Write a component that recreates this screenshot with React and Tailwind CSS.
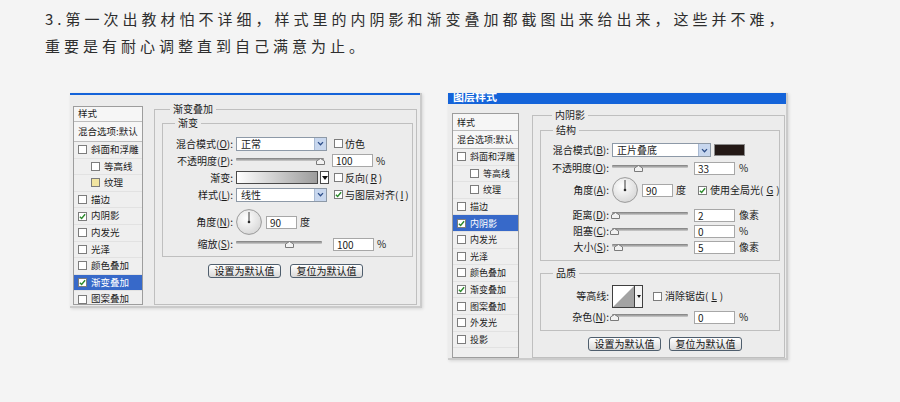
import React from 'react';

const Check = ({ checked, tint }) => (
  <span
    className={`inline-flex items-center justify-center w-[9px] h-[9px] shrink-0 border border-[#7c7c7c] ${
      tint ? 'bg-[#f1e4a0]' : 'bg-white'
    }`}
  >
    {checked && (
      <svg viewBox="0 0 8 8" className="w-[7px] h-[7px]">
        <path d="M1 4.2 L3 6.3 L7 1.4" fill="none" stroke="#2c8a2c" strokeWidth="1.6" />
      </svg>
    )}
  </span>
);

const Key = ({ text, k }) => (
  <>
    {text}
    {k && (
      <>
        (<span className="underline">{k}</span>)
      </>
    )}
    :
  </>
);

const Slider = ({ className, pos }) => (
  <div className={`relative h-[10px] shrink-0 ${className}`}>
    <div className="mt-[2px] h-[3px] rounded-[1px] bg-linear-to-b from-[#7d7d7d] to-[#cfcfcf]" />
    <svg
      viewBox="0 0 9 7"
      className="absolute top-[2px] w-[9px] h-[7px]"
      style={{ left: `calc(${pos * 100}% - 4.5px)` }}
    >
      <path d="M0.5 6.5 L0.5 3 L4.5 0.5 L8.5 3 L8.5 6.5 Z" fill="#f2f2f2" stroke="#7a7a7a" />
    </svg>
  </div>
);

const Select = ({ className, value }) => (
  <div className={`flex h-[14px] shrink-0 border border-[#8d99a7] bg-white ${className}`}>
    <span className="flex-1 pl-[4px] text-[10px] leading-[12px] whitespace-nowrap">{value}</span>
    <span className="w-[12px] flex items-center justify-center bg-[#c8d7ee] border-l border-[#a9bad2]">
      <svg viewBox="0 0 8 6" className="w-[7px] h-[5px]">
        <path d="M1 1.3 L4 4.5 L7 1.3" fill="none" stroke="#2c4d88" strokeWidth="1.5" />
      </svg>
    </span>
  </div>
);

const Field = ({ className, value }) => (
  <div
    className={`h-[13px] shrink-0 bg-white border border-[#a7a7a7] pl-[3px] text-[10px] leading-[11px] ${className}`}
  >
    {value}
  </div>
);

const Dial = () => (
  <svg viewBox="0 0 26 26" className="w-[26px] h-[26px] shrink-0">
    <defs>
      <radialGradient id="dialFill" cx="40%" cy="35%" r="70%">
        <stop offset="0%" stopColor="#ffffff" />
        <stop offset="100%" stopColor="#d6d6d6" />
      </radialGradient>
    </defs>
    <circle cx="13" cy="13" r="12.4" fill="url(#dialFill)" stroke="#9a9a9a" strokeWidth="1" />
    <line x1="13" y1="13" x2="13" y2="3" stroke="#3a3a3a" strokeWidth="1" />
    <circle cx="13" cy="13" r="1.3" fill="#2a2a2a" />
  </svg>
);

const Btn = ({ children }) => (
  <div className="w-[73px] h-[14px] flex items-center justify-center rounded-[3px] border border-[#4f5e6d] bg-linear-to-b from-white to-[#d9d9d9] text-[10px] leading-none text-[#111] whitespace-nowrap">
    {children}
  </div>
);

const Group = ({ title, legendClass = 'ml-[12px]', className = '', children }) => (
  <fieldset className={`min-w-0 border border-[#bfbfbf] ${className}`}>
    <legend className={`px-[3px] text-[10px] leading-[12px] ${legendClass}`}>{title}</legend>
    {children}
  </fieldset>
);

const FormRow = ({ label, labelW, className = 'h-[17px]', children }) => (
  <div className={`flex items-center whitespace-nowrap ${className}`}>
    <span className={`${labelW} shrink-0 text-right text-[10px] leading-none`}>{label}</span>
    <div className="ml-[3px] flex items-center">{children}</div>
  </div>
);

const ListRow = ({ label, checked, selected, indent, tint }) => (
  <div
    className={`h-[16.6px] flex items-center gap-[4px] border-b border-[#e2e2e2] ${indent ? 'pl-[17px]' : 'pl-[4px]'} ${
      selected ? 'bg-[#3769c9] text-white' : ''
    }`}
  >
    <Check checked={checked} tint={tint} />
    <span>{label}</span>
  </div>
);

const StyleList = ({ rows, className, headH, blendH }) => (
  <div className={`shrink-0 overflow-hidden whitespace-nowrap border border-[#9d9d9d] bg-[#efefef] leading-none ${className}`}>
    <div className={`${headH} flex items-center pl-[4px] bg-[#f6f6f6] border-b border-[#bdbdbd]`}>样式</div>
    <div className={`${blendH} flex items-center pl-[4px] bg-[#f6f6f6] border-b border-[#bdbdbd]`}>混合选项:默认</div>
    {rows.map((r) => (
      <ListRow key={r.label} {...r} />
    ))}
  </div>
);

const leftRows = [
  { label: '斜面和浮雕' },
  { label: '等高线', indent: true },
  { label: '纹理', indent: true, tint: true },
  { label: '描边' },
  { label: '内阴影', checked: true },
  { label: '内发光' },
  { label: '光泽' },
  { label: '颜色叠加' },
  { label: '渐变叠加', checked: true, selected: true },
  { label: '图案叠加' },
];

const rightRows = [
  { label: '斜面和浮雕' },
  { label: '等高线', indent: true },
  { label: '纹理', indent: true },
  { label: '描边' },
  { label: '内阴影', checked: true, selected: true },
  { label: '内发光' },
  { label: '光泽' },
  { label: '颜色叠加' },
  { label: '渐变叠加', checked: true },
  { label: '图案叠加' },
  { label: '外发光' },
  { label: '投影' },
];

const GradientDialog = () => (
  <div className="w-[352px] h-[215px] shrink-0 flex flex-col bg-[#ececec] border-r-2 border-b-2 border-[#cbcbcb] shadow-[1px_1px_3px_rgba(0,0,0,0.12)]">
    <div className="h-[2px] bg-[#1463d9]" />
    <div className="flex-1 flex pl-[3px] pr-[3px] pt-[8px] pb-[1px] gap-[11px]">
      <StyleList rows={leftRows} className="w-[70px] h-[199px] mt-[3px] text-[9.5px]" headH="h-[15px]" blendH="h-[20px]" />
      <Group title="渐变叠加" legendClass="ml-[8px]" className="flex-1 pl-[7px] pr-[3px]">
        <Group title="渐变" className="mt-[2px] h-[140px] pt-[6px]">
          <FormRow label={<Key text="混合模式" k="O" />} labelW="w-[70px]">
            <Select className="w-[91px]" value="正常" />
            <span className="ml-[7px] flex items-center gap-[2px] text-[10px] leading-none">
              <Check />
              仿色
            </span>
          </FormRow>
          <FormRow label={<Key text="不透明度" k="P" />} labelW="w-[70px]">
            <Slider className="w-[88px]" pos={0.96} />
            <Field className="ml-[8px] w-[41px]" value="100" />
            <span className="ml-[3px] text-[10px] leading-none">%</span>
          </FormRow>
          <FormRow label={<Key text="渐变" />} labelW="w-[70px]">
            <div className="w-[82px] h-[13px] border border-[#4a4a4a] bg-linear-to-r from-white to-[#9c9c9c]" />
            <div className="ml-[2px] w-[9px] h-[13px] flex items-center justify-center border border-[#4a4a4a] bg-white">
              <svg viewBox="0 0 6 4" className="w-[6px] h-[4px]">
                <path d="M0 0 L6 0 L3 4 Z" fill="#111" />
              </svg>
            </div>
            <span className="ml-[5px] flex items-center gap-[2px] text-[10px] leading-none">
              <Check />
              反向(<span className="underline">R</span>)
            </span>
          </FormRow>
          <FormRow label={<Key text="样式" k="L" />} labelW="w-[70px]">
            <Select className="w-[91px]" value="线性" />
            <span className="ml-[7px] flex items-center gap-[2px] text-[10px] leading-none">
              <Check checked />
              与图层对齐(<span className="underline">I</span>)
            </span>
          </FormRow>
          <FormRow label={<Key text="角度" k="N" />} labelW="w-[70px]" className="mt-[4px] h-[30px]">
            <Dial />
            <Field className="ml-[4px] w-[31px]" value="90" />
            <span className="ml-[3px] text-[10px] leading-none">度</span>
          </FormRow>
          <FormRow label={<Key text="缩放" k="S" />} labelW="w-[70px]" className="h-[14px]">
            <Slider className="w-[86px]" pos={0.62} />
            <Field className="ml-[11px] w-[41px]" value="100" />
            <span className="ml-[3px] text-[10px] leading-none">%</span>
          </FormRow>
        </Group>
        <div className="mt-[7px] flex justify-center gap-[9px] pr-[4px]">
          <Btn>设置为默认值</Btn>
          <Btn>复位为默认值</Btn>
        </div>
      </Group>
    </div>
  </div>
);

const ShadowDialog = () => (
  <div className="w-[340px] h-[267px] shrink-0 flex flex-col bg-[#ececec] border-r-2 border-b-2 border-[#cbcbcb] shadow-[1px_1px_3px_rgba(0,0,0,0.12)]">
    <div className="h-[11px] overflow-hidden bg-[#1463d9]">
      <div className="-mt-[4px] ml-[5px] text-[11px] leading-[14px] font-bold text-white">图层样式</div>
    </div>
    <div className="flex-1 flex pl-[4px] pr-[1px] pt-[5px] gap-[13px]">
      <StyleList rows={rightRows} className="w-[67px] h-[245px] mt-[4px] text-[9px]" headH="h-[17px]" blendH="h-[18px]" />
      <Group title="内阴影" className="flex-1 pl-[7px] pr-[4px]">
        <Group title="结构" className="mt-[3px] pt-[5px] pb-[5px]">
          <FormRow label={<Key text="混合模式" k="B" />} labelW="w-[68px]" className="h-[18px]">
            <Select className="w-[99px]" value="正片叠底" />
            <div className="ml-[3px] w-[31px] h-[12px] bg-[#231815] border border-[#8a8a8a]" />
          </FormRow>
          <FormRow label={<Key text="不透明度" k="O" />} labelW="w-[68px]" className="h-[18px]">
            <Slider className="w-[76px]" pos={0.35} />
            <Field className="ml-[6px] w-[41px]" value="33" />
            <span className="ml-[4px] text-[10px] leading-none">%</span>
          </FormRow>
          <FormRow label={<Key text="角度" k="A" />} labelW="w-[68px]" className="h-[26px]">
            <Dial />
            <Field className="ml-[4px] w-[31px]" value="90" />
            <span className="ml-[3px] text-[10px] leading-none">度</span>
            <span className="ml-[12px] flex items-center gap-[3px] text-[10px] leading-none">
              <Check checked />
              使用全局光(<span className="underline">G</span>)
            </span>
          </FormRow>
          <FormRow label={<Key text="距离" k="D" />} labelW="w-[68px]" className="mt-[4px] h-[16px]">
            <Slider className="w-[76px]" pos={0.04} />
            <Field className="ml-[6px] w-[41px]" value="2" />
            <span className="ml-[4px] text-[10px] leading-none">像素</span>
          </FormRow>
          <FormRow label={<Key text="阻塞" k="C" />} labelW="w-[68px]" className="h-[16px]">
            <Slider className="w-[76px]" pos={0.03} />
            <Field className="ml-[6px] w-[41px]" value="0" />
            <span className="ml-[4px] text-[10px] leading-none">%</span>
          </FormRow>
          <FormRow label={<Key text="大小" k="S" />} labelW="w-[68px]" className="h-[16px]">
            <Slider className="w-[76px]" pos={0.08} />
            <Field className="ml-[6px] w-[41px]" value="5" />
            <span className="ml-[4px] text-[10px] leading-none">像素</span>
          </FormRow>
        </Group>
        <Group title="品质" className="mt-[6px] pt-[5px] pb-[4px]">
          <FormRow label={<Key text="等高线" />} labelW="w-[68px]" className="h-[24px]">
            <div className="w-[31px] h-[23px] flex border border-[#3f3f3f] bg-white">
              <svg viewBox="0 0 21 21" className="w-[21px] h-[21px]">
                <path d="M0 21 L21 0 L21 21 Z" fill="#a3a3a3" />
              </svg>
              <div className="flex-1 flex items-center justify-center border-l border-[#3f3f3f] bg-[#f4f4f4]">
                <svg viewBox="0 0 4 3" className="w-[4px] h-[3px]">
                  <path d="M0 0 L4 0 L2 3 Z" fill="#111" />
                </svg>
              </div>
            </div>
            <span className="ml-[10px] flex items-center gap-[3px] text-[10px] leading-none">
              <Check />
              消除锯齿(<span className="underline">L</span>)
            </span>
          </FormRow>
          <FormRow label={<Key text="杂色" k="N" />} labelW="w-[68px]" className="h-[18px]">
            <Slider className="w-[76px]" pos={0.03} />
            <Field className="ml-[6px] w-[41px]" value="0" />
            <span className="ml-[4px] text-[10px] leading-none">%</span>
          </FormRow>
        </Group>
        <div className="mt-[6px] flex justify-center gap-[8px] pl-[10px]">
          <Btn>设置为默认值</Btn>
          <Btn>复位为默认值</Btn>
        </div>
      </Group>
    </div>
  </div>
);

const App = () => {
  return (
    <div className="w-[900px] h-[402px] overflow-hidden bg-[#f4f4f4] text-[#1b1b1b] font-['Noto_Sans_CJK_SC',sans-serif]">
      {/* heading */}
      <div className="pt-[5px] pl-[45px] text-[15px] leading-[27px] tracking-[4px] font-normal text-[#2e2e2e] whitespace-nowrap">
        <div>3.第一次出教材怕不详细，样式里的内阴影和渐变叠加都截图出来给出来，这些并不难，</div>
        <div>重要是有耐心调整直到自己满意为止。</div>
      </div>

      {/* dialogs */}
      <div className="mt-[34px] pl-[70px] flex items-start gap-[26px]">
        <GradientDialog />
        <ShadowDialog />
      </div>
    </div>
  );
};

export default App;
